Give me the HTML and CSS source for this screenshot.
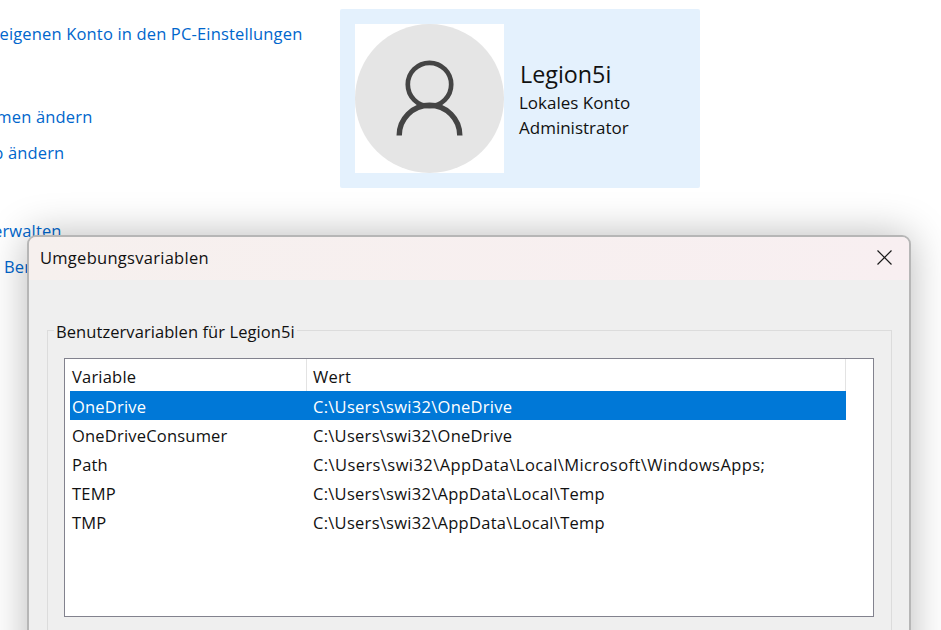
FILE: index.html
```html
<!DOCTYPE html>
<html>
<head>
    <meta charset="utf-8" />
    <title>Umgebungsvariablen</title>
    <link rel="stylesheet" href="styles.css">
</head>
<body>
    <div class="page">
        <div class="links">
            <a class="link first" href="#">Änderungen am eigenen Konto in den PC-Einstellungen</a>
            <a class="link second" href="#">Kontonamen ändern</a>
            <a class="link third" href="#">Kontotyp ändern</a>
            <a class="link fourth" href="#">Anderes Konto verwalten</a>
            <a class="link fifth" href="#">Ben</a>
        </div>
        <div class="account">
            <div class="avatar">
                <svg width="149" height="149" viewBox="0 0 149 149">
                    <circle cx="74.5" cy="74.5" r="74.5" fill="#e5e5e5" />
                    <circle cx="74.5" cy="60.5" r="21.7" fill="none" stroke="#444" stroke-width="4.7" />
                    <path d="M44.2 111.5a30.3 30.3 0 0 1 60.6 0" fill="none" stroke="#444" stroke-width="5.4" />
                </svg>
            </div>
            <div class="account-text">
                <div class="account-name">Legion5i</div>
                <div class="account-line">Lokales Konto</div>
                <div class="account-line">Administrator</div>
            </div>
        </div>
    </div>

    <div class="dialog">
        <div class="titlebar">
            <span class="title">Umgebungsvariablen</span>
            <svg class="close" width="15" height="15" viewBox="0 0 15 15">
                <path d="M.5.5l14 14M14.5.5l-14 14" fill="none" stroke="#1a1a1a" stroke-width="1.2" />
            </svg>
        </div>
        <div class="dialog-body">
            <div class="group">
                <div class="legend">Benutzervariablen für Legion5i</div>
                <div class="list">
                    <div class="row head">
                        <div class="col-name">Variable</div>
                        <div class="col-value">Wert</div>
                    </div>
                    <div class="row selected">
                        <div class="col-name">OneDrive</div>
                        <div class="col-value">C:\Users\swi32\OneDrive</div>
                    </div>
                    <div class="row">
                        <div class="col-name">OneDriveConsumer</div>
                        <div class="col-value">C:\Users\swi32\OneDrive</div>
                    </div>
                    <div class="row long">
                        <div class="col-name">Path</div>
                        <div class="col-value">C:\Users\swi32\AppData\Local\Microsoft\WindowsApps;</div>
                    </div>
                    <div class="row">
                        <div class="col-name">TEMP</div>
                        <div class="col-value">C:\Users\swi32\AppData\Local\Temp</div>
                    </div>
                    <div class="row">
                        <div class="col-name">TMP</div>
                        <div class="col-value">C:\Users\swi32\AppData\Local\Temp</div>
                    </div>
                </div>
            </div>
        </div>
    </div>
</body>
</html>
```

FILE: styles.css
```css
html, body {
    margin: 0;
    height: 100%;
    overflow: hidden;
    background: white;
}
body {
    font-family: "Open Sans", "Noto Sans", sans-serif;
    font-size: 16.5px;
    color: #111;
}
.page {
    display: flex;
    gap: 40px;
    padding-top: 9px;
}

/* links are cut off by the left edge of the shot */
.links {
    width: 300px;
    white-space: nowrap;
}
.link {
    display: block;
    color: #0066cc;
    text-decoration: none;
    line-height: 24px;
    letter-spacing: 0.16px;
}
.first { margin-top: 13px; margin-left: -131px; }
.second { margin-top: 59px; margin-left: -70px; }
.third { margin-top: 12px; margin-left: -68px; }
.fourth { margin-top: 54px; margin-left: -136px; }
.fifth { margin-top: 12px; margin-left: 4px; }

.account {
    display: flex;
    align-items: center;
    gap: 15px;
    width: 345px;
    height: 179px;
    padding-left: 15px;
    background: #e4f1fd;
    border-radius: 2px;
}
.avatar {
    width: 149px;
    height: 149px;
    background: white;
}
.avatar svg {
    display: block;
}
.account-text {
    padding-top: 1px;
}
.account-name {
    font-size: 23.3px;
    line-height: 32px;
    margin-left: 1px;
}
.account-line {
    font-size: 17px;
    line-height: 25px;
}

/* the dialog window floats over the settings page */
.dialog {
    position: absolute;
    left: 27px;
    top: 235px;
    width: 880px;
    height: 500px;
    background: #efefef;
    border: 2px solid #b6b6b6;
    border-radius: 9px;
    box-shadow: 0 0 40px rgba(0,0,0,0.28);
}
.titlebar {
    display: flex;
    align-items: center;
    justify-content: space-between;
    height: 40px;
    padding: 0 17px 3px 11px;
    background: linear-gradient(90deg, #f6f0ee, #f8eff1);
    border-radius: 7px 7px 0 0;
}
.title {
    letter-spacing: 0.28px;
}
.dialog-body {
    padding: 50px 17px 0 18px;
}
.group {
    position: relative;
    height: 400px;
    padding: 27px 17px 0 16px;
    border: 1px solid #dcdcdc;
}
.legend {
    position: absolute;
    left: 6px;
    top: -10px;
    padding: 0 2px;
    line-height: 22px;
    background: #efefef;
    letter-spacing: 0.07px;
}
.list {
    height: 257px;
    padding: 0 27px 0 5px;
    background: white;
    border: 1px solid #82828e;
}
.row {
    display: flex;
    height: 29px;
    line-height: 32px;
}
.head {
    height: 32px;
    line-height: 36px;
}
.col-name {
    width: 243px;
    padding-left: 2px;
    box-sizing: border-box;
    flex: none;
    letter-spacing: 0.2px;
}
.col-value {
    flex: 1;
    white-space: nowrap;
    letter-spacing: 0.28px;
}
.long .col-value {
    letter-spacing: 0.42px;
}
.head .col-name {
    width: 237px;
    margin-right: 6px;
    border-right: 1px solid #e3e3e3;
}
.head .col-value {
    border-right: 1px solid #e3e3e3;
}
.selected {
    background: #0078d7;
    color: white;
}
```
